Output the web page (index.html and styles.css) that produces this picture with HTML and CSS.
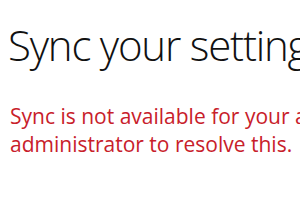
FILE: index.html
```html
<!DOCTYPE html>
<html>
<head>
<meta charset="utf-8">
<link rel="stylesheet" href="styles.css">
</head>
<body>
<main class="page">
  <h1 class="title">Sync your settings</h1>
  <p class="error">
    <span class="line">Sync is not available for your account. Contact your system</span>
    <span class="line">administrator to resolve this.</span>
  </p>
</main>
</body>
</html>
```

FILE: styles.css
```css
html, body {
  margin: 0;
  padding: 0;
  background: #ffffff;
  overflow: hidden;
}
.page {
  width: 300px;
  height: 210px;
  overflow: hidden;
  padding-left: 8px;
  box-sizing: border-box;
}
.title {
  margin: 0;
  padding-top: 17px;
  font-family: "Open Sans", sans-serif;
  font-weight: 300;
  font-size: 42px;
  line-height: 56px;
  letter-spacing: -1.2px;
  color: #111111;
  white-space: nowrap;
}
.error {
  margin: 0;
  padding-top: 29px;
  padding-left: 2px;
  font-family: "Open Sans", sans-serif;
  font-size: 21px;
  line-height: 28px;
  color: #c8202a;
}
.line {
  display: block;
  white-space: nowrap;
}
```
